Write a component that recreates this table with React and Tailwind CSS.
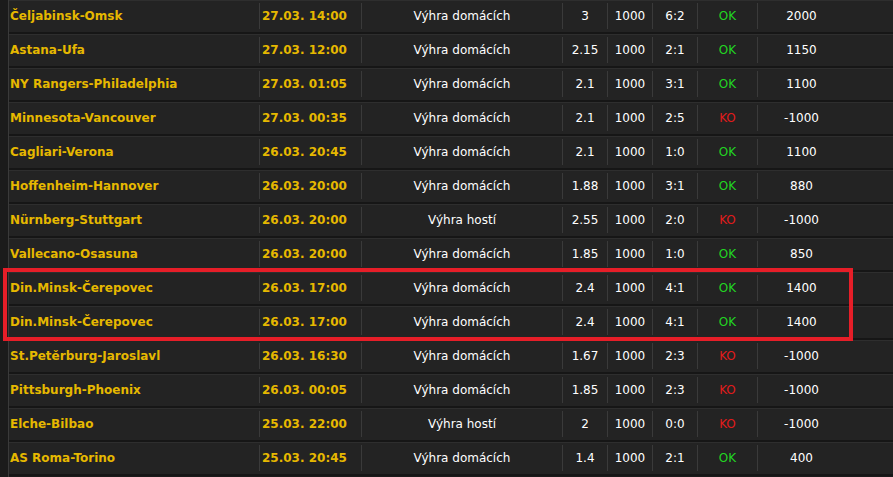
import React from 'react';

const rows = [
  ['Čeljabinsk-Omsk', '27.03. 14:00', 'Výhra domácích', '3', '1000', '6:2', 'OK', '2000'],
  ['Astana-Ufa', '27.03. 12:00', 'Výhra domácích', '2.15', '1000', '2:1', 'OK', '1150'],
  ['NY Rangers-Philadelphia', '27.03. 01:05', 'Výhra domácích', '2.1', '1000', '3:1', 'OK', '1100'],
  ['Minnesota-Vancouver', '27.03. 00:35', 'Výhra domácích', '2.1', '1000', '2:5', 'KO', '-1000'],
  ['Cagliari-Verona', '26.03. 20:45', 'Výhra domácích', '2.1', '1000', '1:0', 'OK', '1100'],
  ['Hoffenheim-Hannover', '26.03. 20:00', 'Výhra domácích', '1.88', '1000', '3:1', 'OK', '880'],
  ['Nürnberg-Stuttgart', '26.03. 20:00', 'Výhra hostí', '2.55', '1000', '2:0', 'KO', '-1000'],
  ['Vallecano-Osasuna', '26.03. 20:00', 'Výhra domácích', '1.85', '1000', '1:0', 'OK', '850'],
  ['Din.Minsk-Čerepovec', '26.03. 17:00', 'Výhra domácích', '2.4', '1000', '4:1', 'OK', '1400'],
  ['Din.Minsk-Čerepovec', '26.03. 17:00', 'Výhra domácích', '2.4', '1000', '4:1', 'OK', '1400'],
  ['St.Petěrburg-Jaroslavl', '26.03. 16:30', 'Výhra domácích', '1.67', '1000', '2:3', 'KO', '-1000'],
  ['Pittsburgh-Phoenix', '26.03. 00:05', 'Výhra domácích', '1.85', '1000', '2:3', 'KO', '-1000'],
  ['Elche-Bilbao', '25.03. 22:00', 'Výhra hostí', '2', '1000', '0:0', 'KO', '-1000'],
  ['AS Roma-Torino', '25.03. 20:45', 'Výhra domácích', '1.4', '1000', '2:1', 'OK', '400'],
];

const sep = 'border-l border-[#3a3a3a]';

function Row({ r }) {
  const [match, date, tip, odds, stake, score, res, profit] = r;
  return (
    <div className="flex h-[34px] bg-[#232323] border-b-2 border-[#161616] shadow-[inset_0_1px_0_#2e2e2e]">
      <div className="flex items-center w-[250px] pl-[1px] py-[3px]">
        <span className="font-bold text-[#e6b800]">{match}</span>
      </div>
      <div className={`flex items-center w-[102px] pl-[2px] my-[3px] ${sep}`}>
        <span className="font-bold text-[#e6b800]">{date}</span>
      </div>
      <div className={`flex items-center justify-center w-[201px] my-[3px] ${sep} text-white`}>{tip}</div>
      <div className={`flex items-center justify-center w-[45px] my-[3px] ${sep} text-white`}>{odds}</div>
      <div className={`flex items-center justify-center w-[45px] my-[3px] ${sep} text-white`}>{stake}</div>
      <div className={`flex items-center justify-center w-[45px] my-[3px] ${sep} text-white`}>{score}</div>
      <div className={`flex items-center justify-center w-[60px] my-[3px] ${sep} ${res === 'OK' ? 'text-[#22d522]' : 'text-[#e01b1b]'}`}>{res}</div>
      <div className={`flex items-center justify-center w-[88px] my-[3px] ${sep} text-white`}>{profit}</div>
      <div className="flex-1" />
    </div>
  );
}

export default function App() {
  return (
    <div className="w-[893px] h-[477px] overflow-hidden bg-[#1b1b1b] flex font-['DejaVu_Sans',sans-serif] text-[12px]">
      <div className="w-[8px] shrink-0" />
      <div className="relative flex-1 border-l border-[#3a3a3a]">
        {rows.map((r, i) => (
          <Row key={i} r={r} />
        ))}
        <div className="absolute left-[-6px] top-[268px] w-[850px] h-[73px] border-4 border-[#e61e28]" />
      </div>
    </div>
  );
}
